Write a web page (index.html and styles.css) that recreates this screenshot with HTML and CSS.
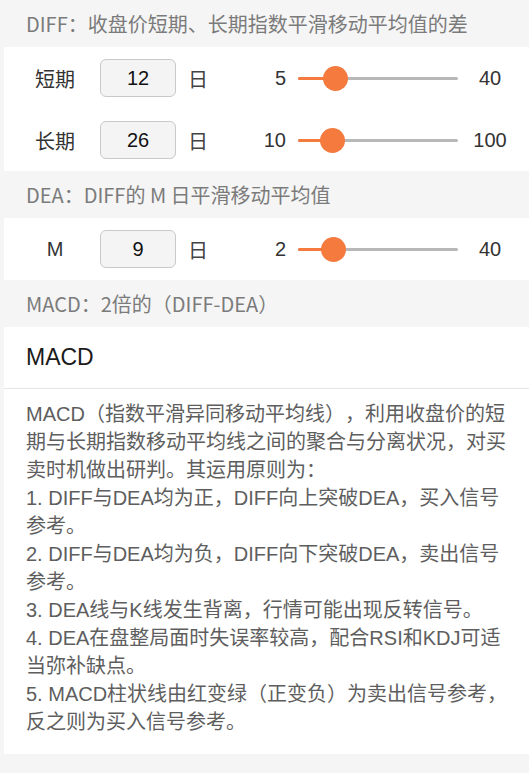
FILE: index.html
```html
<!DOCTYPE html>
<html lang="zh-CN">
<head>
<meta charset="utf-8">
<title>MACD</title>
<link rel="stylesheet" href="styles.css">
</head>
<body>
<div class="page">
  <div class="sec-head">DIFF：收盘价短期、长期指数平滑移动平均值的差</div>
  <div class="params">
    <div class="row">
      <div class="label">短期</div>
      <div class="value">12</div>
      <div class="unit">日</div>
      <div class="min">5</div>
      <div class="slider" style="--p: 0.2"><div class="fill"></div><div class="thumb"></div></div>
      <div class="max">40</div>
    </div>
    <div class="row">
      <div class="label">长期</div>
      <div class="value">26</div>
      <div class="unit">日</div>
      <div class="min">10</div>
      <div class="slider" style="--p: 0.178"><div class="fill"></div><div class="thumb"></div></div>
      <div class="max">100</div>
    </div>
  </div>
  <div class="sec-head">DEA：DIFF的 M 日平滑移动平均值</div>
  <div class="params">
    <div class="row">
      <div class="label">M</div>
      <div class="value">9</div>
      <div class="unit">日</div>
      <div class="min">2</div>
      <div class="slider" style="--p: 0.184"><div class="fill"></div><div class="thumb"></div></div>
      <div class="max">40</div>
    </div>
  </div>
  <div class="sec-head">MACD：2倍的（DIFF-DEA）</div>
  <div class="title">MACD</div>
  <div class="desc">
    <p>MACD（指数平滑异同移动平均线），利用收盘价的短期与长期指数移动平均线之间的聚合与分离状况，对买卖时机做出研判。其运用原则为：</p>
    <p>1. DIFF与DEA均为正，DIFF向上突破DEA，买入信号参考。</p>
    <p>2. DIFF与DEA均为负，DIFF向下突破DEA，卖出信号参考。</p>
    <p>3. DEA线与K线发生背离，行情可能出现反转信号。</p>
    <p>4. DEA在盘整局面时失误率较高，配合RSI和KDJ可适当弥补缺点。</p>
    <p>5. MACD柱状线由红变绿（正变负）为卖出信号参考，反之则为买入信号参考。</p>
  </div>
</div>
</body>
</html>
```

FILE: styles.css
```css
* { box-sizing: border-box; }
html, body {
  margin: 0;
  padding: 0;
  background: #f5f5f5;
}
body {
  font-family: "Liberation Sans", "Noto Sans CJK SC", sans-serif;
  text-spacing-trim: space-all;
  height: 773px;
  overflow: hidden;
}
.page {
  margin-left: 4px;
}
.sec-head {
  height: 47px;
  display: flex;
  align-items: center;
  padding-left: 22px;
  font-family: "Noto Sans CJK SC", sans-serif;
  font-size: 20px;
  color: #7b7b7b;
  background: #f5f5f5;
  white-space: pre;
}
.params {
  background: #fff;
}
.row {
  height: 62px;
  display: flex;
  align-items: center;
}
.label {
  width: 80px;
  padding-left: 22px;
  text-align: center;
  font-size: 20px;
  color: #333;
}
.value {
  margin-left: 16px;
  width: 76px;
  height: 38px;
  border: 1px solid #c9c9c9;
  border-radius: 6px;
  background: #f4f4f4;
  display: flex;
  align-items: center;
  justify-content: center;
  font-size: 20px;
  color: #111;
}
.unit {
  margin-left: 12px;
  font-size: 20px;
  color: #444;
}
.min {
  width: 78px;
  text-align: right;
  font-size: 20px;
  color: #333;
}
.slider {
  position: relative;
  margin-left: 12px;
  width: 160px;
  height: 3px;
  background: #b8b8b8;
  border-radius: 2px;
}
.fill {
  position: absolute;
  left: 0;
  top: 0;
  height: 3px;
  width: calc(12px + var(--p) * 136px);
  background: #f47a3e;
  border-radius: 2px;
}
.thumb {
  position: absolute;
  top: -11px;
  left: calc(var(--p) * 136px - 2px);
  width: 25px;
  height: 25px;
  border-radius: 50%;
  background: #f47a3e;
}
.max {
  margin-left: 12px;
  width: 40px;
  text-align: center;
  font-size: 20px;
  color: #333;
}
.title {
  height: 62px;
  display: flex;
  align-items: center;
  padding-left: 22px;
  font-size: 23px;
  color: #1a1a1a;
  background: #fff;
  border-bottom: 1px solid #e6e6e6;
}
.desc {
  background: #fff;
  padding: 11px 16px 18px 22px;
  font-size: 20px;
  line-height: 28px;
  color: #5e5e5e;
}
.desc p {
  margin: 0;
}
```
